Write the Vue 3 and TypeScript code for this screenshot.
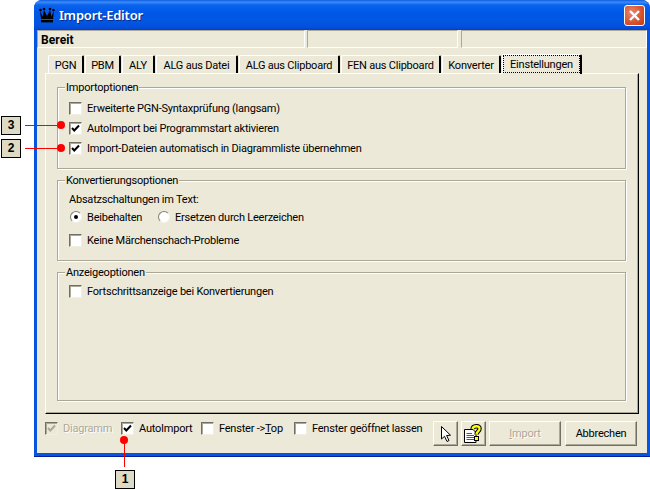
<script setup lang="ts">
interface Opt { label: string; checked?: boolean }
const tabs: string[] = ['PGN', 'PBM', 'ALY', 'ALG aus Datei', 'ALG aus Clipboard', 'FEN aus Clipboard', 'Konverter', 'Einstellungen']
const importOpts: Opt[] = [
  { label: 'Erweiterte PGN-Syntaxprüfung (langsam)' },
  { label: 'AutoImport bei Programmstart aktivieren', checked: true },
  { label: 'Import-Dateien automatisch in Diagrammliste übernehmen', checked: true }
]
</script>

<template>
  <div class="page">
    <div class="window">
      <div class="titlebar">
        <svg class="crown" width="16" height="16" viewBox="0 0 16 16">
          <path d="M1 3.5 L3.5 9.5 L5 3 L8 9 L11 3 L12.5 9.5 L15 3.5 L14 12 L2 12 Z" fill="#000" />
          <circle cx="1.5" cy="3" r="1.3" fill="#000" /><circle cx="5" cy="2" r="1.3" fill="#000" />
          <circle cx="11" cy="2" r="1.3" fill="#000" /><circle cx="14.5" cy="3" r="1.3" fill="#000" />
          <rect x="2" y="13" width="12" height="2.4" fill="#000" />
        </svg>
        <span class="title">Import-Editor</span>
        <div class="close">
          <svg width="13" height="13" viewBox="0 0 13 13"><path d="M2 2 L11 11 M11 2 L2 11" stroke="#fff" stroke-width="2.4" /></svg>
        </div>
      </div>
      <div class="client">
        <div class="status">
          <div class="cell c1">Bereit</div>
          <div class="cell c2"></div>
          <div class="cell c3"></div>
        </div>
        <div class="tabs">
          <div v-for="(t, i) in tabs" :key="t" class="tab" :class="{ active: i === 7 }">
            <span class="tabtext">{{ t }}</span>
          </div>
        </div>
        <div class="panel">
          <div class="group g1">
            <div class="legend">Importoptionen</div>
            <div v-for="o in importOpts" :key="o.label" class="check row">
              <span class="box">
                <svg v-if="o.checked" width="11" height="11" viewBox="0 0 11 11"><path d="M2 5 L4.3 7.5 L9 2.5" fill="none" stroke="#000" stroke-width="2" /></svg>
              </span>
              <span>{{ o.label }}</span>
            </div>
          </div>
          <div class="group g2">
            <div class="legend">Konvertierungsoptionen</div>
            <div class="plain">Absatzschaltungen im Text:</div>
            <div class="radios">
              <div class="check r1"><span class="radio on"></span><span>Beibehalten</span></div>
              <div class="check"><span class="radio"></span><span>Ersetzen durch Leerzeichen</span></div>
            </div>
            <div class="check k1"><span class="box"></span><span>Keine Märchenschach-Probleme</span></div>
          </div>
          <div class="group g3">
            <div class="legend">Anzeigeoptionen</div>
            <div class="check"><span class="box"></span><span>Fortschrittsanzeige bei Konvertierungen</span></div>
          </div>
        </div>
        <div class="footer">
          <div class="check disabled f1">
            <span class="box dis">
              <svg width="11" height="11" viewBox="0 0 11 11"><path d="M2 5 L4.3 7.5 L9 2.5" fill="none" stroke="#aca899" stroke-width="2" /></svg>
            </span>
            <span>Diagramm</span>
          </div>
          <div class="check f2">
            <span class="box"><svg width="11" height="11" viewBox="0 0 11 11"><path d="M2 5 L4.3 7.5 L9 2.5" fill="none" stroke="#000" stroke-width="2" /></svg></span>
            <span>AutoImport</span>
          </div>
          <div class="check f3"><span class="box"></span><span>Fenster -&gt;<u>T</u>op</span></div>
          <div class="check f4"><span class="box"></span><span>Fenster geöffnet lassen</span></div>
          <button class="btn icon b1">
            <svg width="16" height="18" viewBox="0 0 16 18">
              <path d="M3.5 1.5 V14 L6.5 11.3 L9 16.5 L11 15.5 L8.6 10.5 L12.5 10.2 Z" fill="#fff" stroke="#000" stroke-width="1" />
            </svg>
          </button>
          <button class="btn icon b2">
            <svg width="22" height="20" viewBox="0 0 22 20">
              <path d="M1.5 5.5 H10 L13 8.5 V18.5 H1.5 Z" fill="#fff" stroke="#000" stroke-width="1" />
              <path d="M3.5 9.5 H9 M3.5 11.5 H11 M3.5 13.5 H11 M3.5 15.5 H11" stroke="#555" stroke-width="1" />
              <path d="M9.5 5 C10 1.5 17 1 16.5 5 C16.3 7.5 13.5 7.5 13.5 10.5" fill="none" stroke="#000" stroke-width="4.4" />
              <path d="M9.5 5 C10 1.5 17 1 16.5 5 C16.3 7.5 13.5 7.5 13.5 10.5" fill="none" stroke="#ffff00" stroke-width="2.4" />
              <rect x="11.5" y="12.5" width="4" height="4" fill="#ffff00" stroke="#000" />
            </svg>
          </button>
          <button class="btn text b3" disabled><u>I</u>mport</button>
          <button class="btn text b4">Abbrechen</button>
        </div>
      </div>
    </div>

    <div class="tag t3">3</div>
    <div class="hline l3"></div>
    <div class="dot d3"></div>
    <div class="tag t2">2</div>
    <div class="hline l2"></div>
    <div class="dot d2"></div>
    <div class="tag t1">1</div>
    <div class="vline"></div>
    <div class="dot d1"></div>
  </div>
</template>

<style>
html, body { margin: 0; background: #fff; }
</style>

<style scoped>
.page {
  position: relative;
  width: 650px;
  height: 490px;
  overflow: hidden;
  background: #fff;
  font-family: Roboto, "Liberation Sans", Arial, sans-serif;
  font-size: 11px;
  letter-spacing: -0.22px;
  color: #000;
}
.window {
  margin-left: 34px;
  width: 616px;
  height: 457px;
  box-sizing: border-box;
  display: flex;
  flex-direction: column;
  border-radius: 8px 8px 0 0;
  background: linear-gradient(#0058ee, #0855dd 50px);
  border-bottom: 1px solid #001ea0;
  overflow: hidden;
}
.titlebar {
  height: 30px;
  flex: none;
  display: flex;
  align-items: center;
  padding: 0 5px 0 5px;
  background: linear-gradient(#0a5ae0 0, #3c8cf8 2px, #0a63ee 5px, #0058e8 12px, #0256e0 22px, #0250dc 27px, #0340c8 30px);
}
.crown { margin-left: 0; margin-top: -1px; }
.title {
  margin-left: 4px;
  color: #fff;
  font-family: "Noto Sans", sans-serif;
  font-size: 13px;
  font-weight: 600;
  letter-spacing: -0.2px;
  text-shadow: 1px 1px 0 #0a2a90;
}
.close {
  margin-left: auto;
  width: 21px;
  height: 21px;
  box-sizing: border-box;
  border: 1px solid #fff;
  border-radius: 3px;
  background: radial-gradient(circle at 35% 35%, #e88a70, #d8502c 60%, #c03a18);
  display: flex;
  align-items: center;
  justify-content: center;
}
.client {
  flex: 1;
  margin: 0 3px 3px;
  background: #ece9d8;
  display: flex;
  flex-direction: column;
  min-height: 0;
}
.status { display: flex; gap: 2px; height: 18px; flex: none; }
.cell {
  box-sizing: border-box;
  border: 1px solid;
  border-color: #aca899 #fff #fff #aca899;
  padding: 2px 3px 0;
  line-height: 14px;
  font-weight: 700;
  font-size: 12px;
  letter-spacing: 0.1px;
}
.c1 { width: 268px; }
.c2 { width: 152px; }
.c3 { width: 186px; margin-left: 1px; }
.tabs {
  margin: 7px 0 0 11px;
  height: 18px;
  display: grid;
  grid-template-columns: 36px 36px 33px 82px 101px 100px 59px 80px;
  column-gap: 1px;
  flex: none;
  position: relative;
  z-index: 1;
}
.tab {
  box-sizing: border-box;
  height: 18px;
  border-top: 1px solid #fff;
  border-left: 1px solid #fff;
  border-right: 2px solid #000;
  border-radius: 2px 2px 0 0;
  text-align: center;
  line-height: 20px;
  white-space: nowrap;
}
.tab.active {
  height: 20px;
  margin-top: -1px;
  background: #ece9d8;
  position: relative;
}
.tab.active .tabtext {
  display: block;
  margin: 1px 1px 0 1px;
  height: 16px;
  line-height: 17px;
  outline: 1px dotted #000;
}
.panel {
  margin: 0 8px;
  height: 341px;
  flex: none;
  box-sizing: border-box;
  border-top: 1px solid #fff;
  border-left: 1px solid #fff;
  border-right: 1px solid #000;
  border-bottom: 1px solid #000;
  box-shadow: inset -1px -1px 0 #aca899;
  padding: 13px 12px 0 11px;
  display: flex;
  flex-direction: column;
  gap: 11px;
}
.group {
  position: relative;
  box-sizing: border-box;
  border: 1px solid #aca899;
  box-shadow: 1px 1px 0 #fff, inset 1px 1px 0 #fff;
  padding: 0 11px;
  flex: none;
}
.g1 { height: 82px; padding-top: 10px; }
.g2 { height: 81px; padding-top: 12px; }
.g3 { height: 129px; padding-top: 8px; }
.legend {
  position: absolute;
  left: 7px;
  top: -7px;
  padding: 0 1px;
  background: #ece9d8;
  line-height: 14px;
}
.check { display: flex; align-items: center; height: 20px; gap: 5px; white-space: nowrap; }
.plain { height: 14px; line-height: 14px; }
.radios { display: flex; height: 18px; }
.r1 { width: 88px; }
.k1 { margin-top: 5px; }
.box {
  flex: none;
  box-sizing: border-box;
  width: 13px;
  height: 13px;
  background: #fff;
  border: 1px solid;
  border-color: #716f64 #f1efe2 #f1efe2 #716f64;
  box-shadow: inset 1px 1px 0 #aca899;
  display: flex;
  align-items: center;
  justify-content: center;
}
.box.dis { background: #ece9d8; }
.radio {
  flex: none;
  box-sizing: border-box;
  width: 12px;
  height: 12px;
  margin-left: 1px;
  border-radius: 50%;
  background: #fff;
  border: 1px solid;
  border-color: #808070 #f4f3ea #f4f3ea #808070;
  position: relative;
}
.radio.on::after {
  content: "";
  position: absolute;
  left: 3px;
  top: 3px;
  width: 4px;
  height: 4px;
  border-radius: 50%;
  background: #000;
}
.footer {
  display: flex;
  align-items: flex-start;
  margin-top: 7px;
  height: 26px;
  flex: none;
  padding-left: 8px;
}
.footer .check { height: 14px; }
.disabled { color: #aca899; text-shadow: 1px 1px 0 #fff; }
.f1 { width: 76px; }
.f2 { width: 80px; }
.f3 { width: 93px; }
.f4 { width: 139px; }
.btn {
  box-sizing: border-box;
  height: 25px;
  padding: 0;
  background: #ece9d8;
  border: 1px solid;
  border-color: #fff #716f64 #716f64 #fff;
  box-shadow: inset -1px -1px 0 #aca899;
  font: inherit;
  letter-spacing: inherit;
  color: #000;
  display: flex;
  align-items: center;
  justify-content: center;
}
.icon { width: 25px; }
.b2 { margin-left: 3px; }
.text { width: 72px; }
.b3 { margin-left: 3px; color: #aca899; text-shadow: 1px 1px 0 #fff; }
.b4 { margin-left: 4px; }
.tag {
  position: absolute;
  box-sizing: border-box;
  width: 20px;
  height: 19px;
  background: #dedac4;
  border: 1px solid #000;
  text-align: center;
  font-family: "Liberation Sans", sans-serif;
  font-weight: 700;
  line-height: 17px;
  font-size: 12px;
  letter-spacing: 0;
}
.t3 { left: 1px; top: 116px; }
.t2 { left: 1px; top: 139px; }
.t1 { left: 115px; top: 470px; }
.hline { position: absolute; left: 25px; width: 32px; height: 1px; background: #f00; }
.l3 { top: 125px; }
.l2 { top: 148px; }
.vline { position: absolute; left: 124px; top: 442px; width: 1px; height: 25px; background: #f00; }
.dot { position: absolute; width: 8px; height: 8px; border-radius: 50%; background: #f00; }
.d3 { left: 57px; top: 121px; }
.d2 { left: 57px; top: 144px; }
.d1 { left: 120px; top: 436px; }
</style>
